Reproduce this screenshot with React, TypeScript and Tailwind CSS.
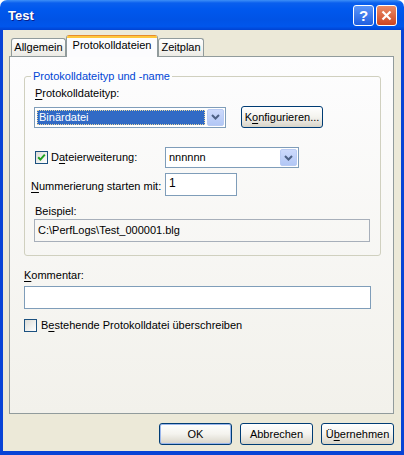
import React from 'react';

const U = ({ children }: { children: React.ReactNode }) => (
  <span className="underline underline-offset-[2px] decoration-1">{children}</span>
);

const Chevron = () => (
  <svg width="9" height="6" viewBox="0 0 9 6">
    <path d="M1 1 L4.5 4.5 L8 1" fill="none" stroke="#4d6185" strokeWidth="2" />
  </svg>
);

function DropButton() {
  return (
    <div className="w-[17px] h-[17px] rounded-[2px] border border-[#b9cbf3] bg-linear-to-b from-[#cddafc] to-[#b2c7f5] flex items-center justify-center shrink-0">
      <Chevron />
    </div>
  );
}

function XpButton({ children, width, isDefault }: { children: React.ReactNode; width: string; isDefault?: boolean }) {
  return (
    <button
      className={`${width} h-[22px] rounded-[3px] border border-[#003c74] bg-linear-to-b from-[#ffffff] via-[#f4f3ee] to-[#d8d4c8] flex items-center justify-center text-black ${
        isDefault ? 'shadow-[inset_0_0_0_1px_#9bb7ec]' : ''
      }`}
    >
      {children}
    </button>
  );
}

function CheckBox({ checked }: { checked?: boolean }) {
  return (
    <div className="w-[13px] h-[13px] border border-[#1c5180] bg-linear-to-br from-[#dcdcd7] to-white flex items-center justify-center shrink-0">
      {checked && (
        <svg width="9" height="9" viewBox="0 0 9 9">
          <path d="M1.2 4.2 L3.4 6.6 L7.8 1.6" fill="none" stroke="#21a121" strokeWidth="2" />
        </svg>
      )}
    </div>
  );
}

export default function App() {
  return (
    <div className="w-[404px] h-[455px] flex flex-col font-['Liberation_Sans',Arial,sans-serif] text-[11px] leading-[13px] text-black bg-white">
      {/* Title bar */}
      <div className="h-[30px] shrink-0 rounded-t-[7px] bg-[linear-gradient(180deg,#3d8ff7_0%,#0a5fee_10%,#0058ee_30%,#0053e6_65%,#0056ec_88%,#0042d2_100%)] flex items-center pl-[8px] pr-[7px]">
        <span className="flex-1 text-white font-bold text-[13px] [text-shadow:1px_1px_0_#0a1e8a] pt-[1px]">Test</span>
        <div className="flex gap-[2px]">
          <div className="w-[21px] h-[21px] rounded-[3px] border border-white bg-linear-to-b from-[#5c95f8] to-[#1f5ee0] flex items-center justify-center text-white font-bold text-[15px]">
            ?
          </div>
          <div className="w-[21px] h-[21px] rounded-[3px] border border-white bg-linear-to-b from-[#ea8a66] to-[#cc4420] flex items-center justify-center">
            <svg width="11" height="11" viewBox="0 0 11 11">
              <path d="M1.5 1.5 L9.5 9.5 M9.5 1.5 L1.5 9.5" stroke="white" strokeWidth="2.2" />
            </svg>
          </div>
        </div>
      </div>

      {/* Body */}
      <div className="flex-1 flex flex-col bg-[#ece9d8] border-x-[3px] border-b-[4px] border-[#0843d6] pt-[5px]">
        {/* Tabs */}
        <div className="flex items-end h-[21px] pl-[8px]">
          <div className="w-[55px] h-[18px] border border-b-0 border-[#919b9c] rounded-t-[3px] bg-linear-to-b from-white to-[#ecebe5] flex items-center justify-center">
            Allgemein
          </div>
          <div className="w-[92px] h-[22px] -mb-[1px] relative z-10 bg-[#fcfcfe] border-x border-[#919b9c] rounded-t-[3px] flex flex-col overflow-hidden">
            <div className="h-[1px] bg-[#e68b2c]" />
            <div className="h-[2px] bg-[#ffc73c]" />
            <div className="flex justify-center pt-[1px]">Protokolldateien</div>
          </div>
          <div className="w-[46px] h-[18px] border border-b-0 border-[#919b9c] rounded-t-[3px] bg-linear-to-b from-white to-[#ecebe5] flex items-center justify-center">
            Zeitplan
          </div>
        </div>

        {/* Panel */}
        <div className="ml-[6px] mr-[7px] h-[358px] border border-[#919b9c] bg-linear-to-b from-[#fdfdfe] to-[#f2f1eb] flex flex-col">
          <fieldset className="mt-[13px] ml-[14px] mr-[12px] border border-[#d0d0bf] rounded-[3px] pl-[9px] pb-[13px]">
            <legend className="-ml-[3px] px-[2px] text-[#0046d5]">Protokolldateityp und -name</legend>

            <div className="mt-[4px] pl-[1px]">
              <U>P</U>rotokolldateityp:
            </div>

            <div className="mt-[6px] flex items-center">
              <div className="w-[192px] h-[21px] border border-[#7f9db9] bg-white flex items-center pl-[2px] pr-[1px]">
                <div className="flex-1 h-[15px] bg-[#316ac5] border border-dotted border-[#e8d8a0] text-white flex items-center pl-[1px] mr-[2px]">
                  Binärdatei
                </div>
                <DropButton />
              </div>
              <div className="ml-[15px]">
                <XpButton width="w-[82px]">
                  K<U>o</U>nfigurieren...
                </XpButton>
              </div>
            </div>

            <div className="mt-[19px] flex items-center">
              <div className="w-[131px] flex items-center pl-[1px]">
                <CheckBox checked />
                <span className="ml-[3px]">
                  D<U>a</U>teierweiterung:
                </span>
              </div>
              <div className="w-[134px] h-[21px] border border-[#7f9db9] bg-white flex items-center pl-[3px] pr-[1px]">
                <span className="flex-1">nnnnnn</span>
                <DropButton />
              </div>
            </div>

            <div className="mt-[5px] flex items-center">
              <span className="-ml-[3px] w-[134px] mt-[3px]">
                <U>N</U>ummerierung starten mit:
              </span>
              <div className="w-[72px] h-[23px] border border-[#7f9db9] bg-white flex items-start pl-[3px] pt-[3px] text-[12px]">
                1
              </div>
            </div>

            <div className="mt-[9px] pl-[1px]">Beispiel:</div>
            <div className="mt-[1px] w-[336px] h-[23px] border border-[#a7afba] flex items-center pl-[3px]">
              C:\PerfLogs\Test_000001.blg
            </div>
          </fieldset>

          <div className="mt-[13px] ml-[14px]">
            <U>K</U>ommentar:
          </div>
          <div className="mt-[4px] ml-[14px] w-[347px] h-[23px] border border-[#7f9db9] bg-white" />

          <div className="mt-[10px] ml-[14px] flex items-center">
            <CheckBox />
            <span className="ml-[4px]">
              B<U>e</U>stehende Protokolldatei überschreiben
            </span>
          </div>
        </div>

        {/* Dialog buttons */}
        <div className="flex justify-end gap-[8px] pr-[7px] mt-[9px]">
          <XpButton width="w-[73px]" isDefault>
            OK
          </XpButton>
          <XpButton width="w-[73px]">Abbrechen</XpButton>
          <XpButton width="w-[73px]">
            Ü<U>b</U>ernehmen
          </XpButton>
        </div>
      </div>
    </div>
  );
}
